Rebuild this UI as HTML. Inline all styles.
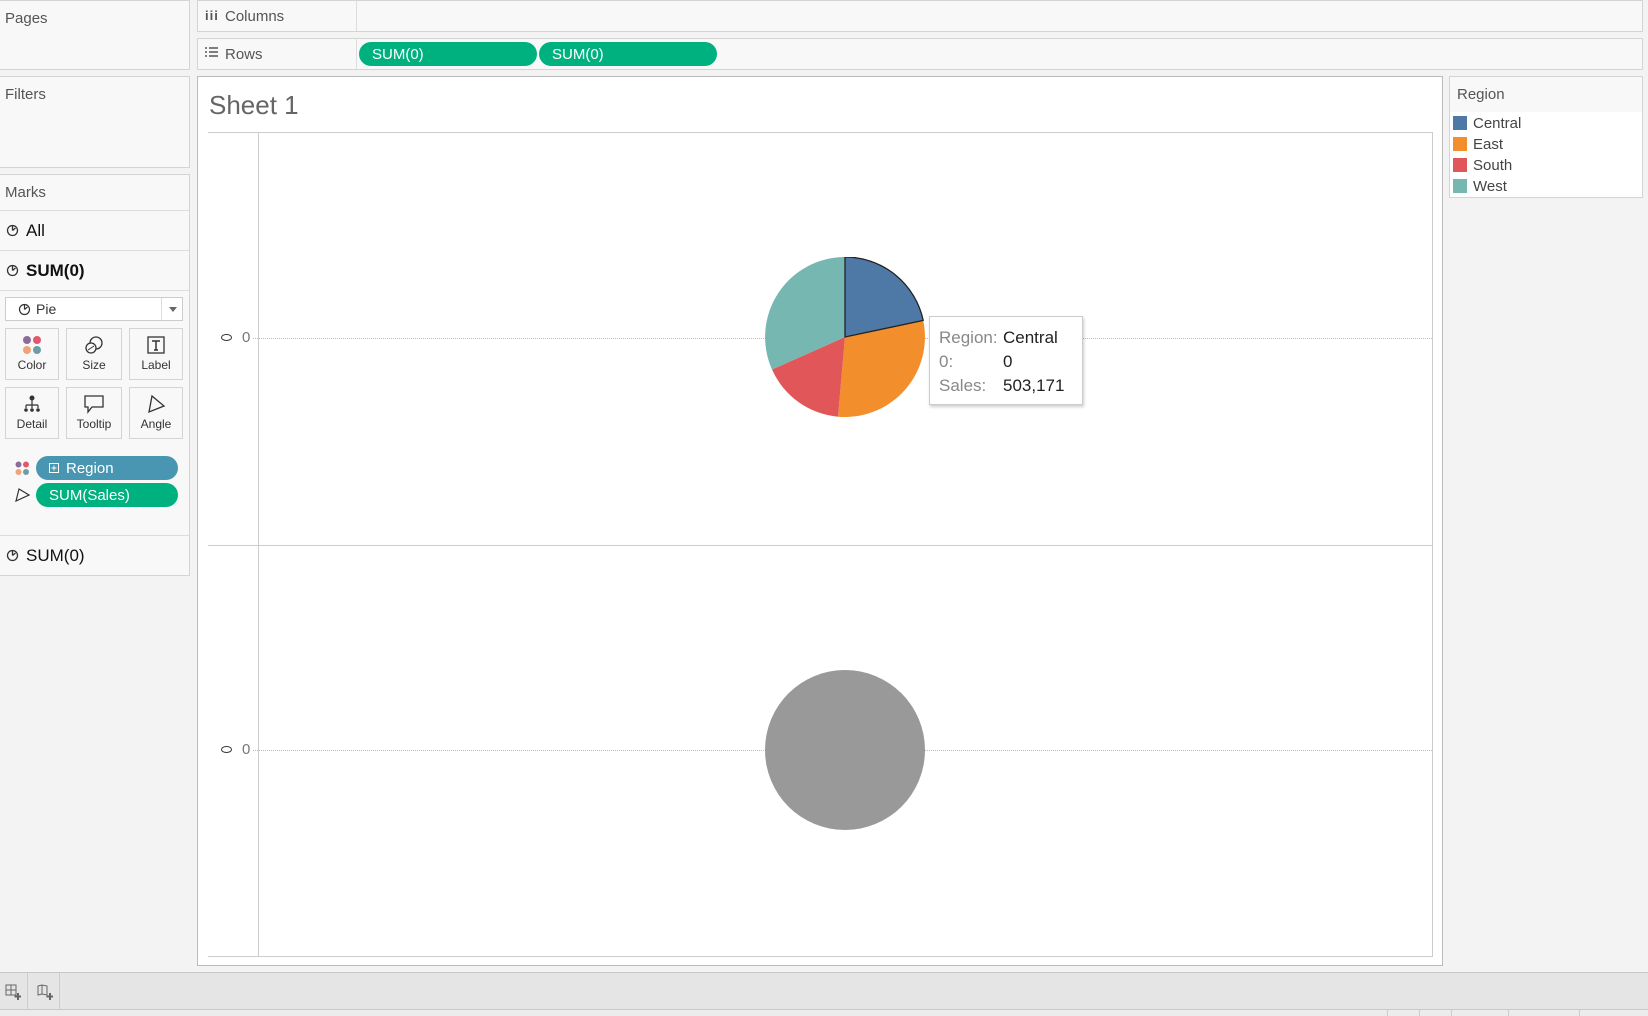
<!DOCTYPE html>
<html><head><meta charset="utf-8"><style>
*{box-sizing:border-box;margin:0;padding:0}
body{width:1648px;height:1016px;background:#f3f3f3;font-family:"Liberation Sans",sans-serif;position:relative;overflow:hidden;color:#333}
.a{position:absolute}
.panel{position:absolute;background:#f8f8f8;border:1px solid #d4d4d4}
.lbl{position:absolute;font-size:15px;color:#555}
.pill{position:absolute;height:24px;border-radius:12px;color:#fff;font-size:15px;line-height:26px}
.card{position:absolute;border:1px solid #d4d4d4;background:#f8f8f8;font-size:12px;color:#333;text-align:center}
.card span{position:absolute;left:0;right:0;bottom:7px}
.card svg{position:absolute;left:50%;top:6px;transform:translateX(-50%)}
.row{position:absolute;left:0;width:190px;border-top:1px solid #dcdcdc;font-size:17px;color:#111}
</style></head><body>
<div class="panel" style="left:-1px;top:0;width:191px;height:70px"></div>
<div class="lbl" style="left:5px;top:10px">Pages</div>
<div class="panel" style="left:-1px;top:76px;width:191px;height:92px"></div>
<div class="lbl" style="left:5px;top:86px">Filters</div>
<div class="panel" style="left:-1px;top:174px;width:191px;height:402px"></div>
<div class="lbl" style="left:5px;top:184px">Marks</div>
<div class="row" style="top:210px;height:40px"><svg class="a" style="left:6px;top:13px" width="13" height="13"><circle cx="6.5" cy="6.5" r="5" fill="none" stroke="#333" stroke-width="1.3"/><path d="M6.5 6.5V1.5M6.5 6.5L9.5 4" stroke="#333" stroke-width="1.3"/></svg><span class="a" style="left:26px;top:10px">All</span></div>
<div class="row" style="top:250px;height:40px"><svg class="a" style="left:6px;top:13px" width="13" height="13"><circle cx="6.5" cy="6.5" r="5" fill="none" stroke="#333" stroke-width="1.3"/><path d="M6.5 6.5V1.5M6.5 6.5L9.5 4" stroke="#333" stroke-width="1.3"/></svg><b class="a" style="left:26px;top:10px">SUM(0)</b></div>
<div class="row" style="top:290px;height:245px"></div>
<div class="a" style="left:5px;top:297px;width:178px;height:24px;border:1px solid #ccc;background:#fff;font-size:14px;color:#333">
<svg class="a" style="left:12px;top:5px" width="13" height="13"><circle cx="6.5" cy="6.5" r="5" fill="none" stroke="#333" stroke-width="1.2"/><path d="M6.5 6.5V1.5M6.5 6.5L9.5 4" stroke="#333" stroke-width="1.2"/></svg>
<span class="a" style="left:30px;top:3px">Pie</span>
<div class="a" style="left:155px;top:0;width:1px;height:22px;background:#ddd"></div>
<div class="a" style="left:163px;top:9px;border:4px solid transparent;border-top:5px solid #666"></div></div>
<div class="card" style="left:5px;top:328px;width:54px;height:52px"><svg width="20" height="20"><circle cx="5" cy="5" r="4" fill="#8c6d9a"/><circle cx="15" cy="5" r="4" fill="#e2576b"/><circle cx="5" cy="15" r="4" fill="#f0a37a"/><circle cx="15" cy="15" r="4" fill="#6b9ea5"/></svg><span>Color</span></div>
<div class="card" style="left:66px;top:328px;width:56px;height:52px"><svg width="20" height="20"><circle cx="12" cy="8" r="6" fill="none" stroke="#333" stroke-width="1.3"/><circle cx="7" cy="13" r="5" fill="#f8f8f8" stroke="#333" stroke-width="1.3"/><path d="M4 15L10 11" stroke="#333"/></svg><span>Size</span></div>
<div class="card" style="left:129px;top:328px;width:54px;height:52px"><svg width="20" height="20"><rect x="2" y="2" width="16" height="16" fill="none" stroke="#333" stroke-width="1.3"/><path d="M6 6H14M10 6V15M8 15H12" stroke="#333" stroke-width="1.5"/></svg><span>Label</span></div>
<div class="card" style="left:5px;top:387px;width:54px;height:52px"><svg width="20" height="20"><circle cx="10" cy="4" r="2.5" fill="#333"/><path d="M10 6V11M4 11H16M4 11V14M10 11V14M16 11V14" stroke="#333" stroke-width="1.2"/><circle cx="4" cy="16" r="1.8" fill="#333"/><circle cx="10" cy="16" r="1.8" fill="#333"/><circle cx="16" cy="16" r="1.8" fill="#333"/></svg><span>Detail</span></div>
<div class="card" style="left:66px;top:387px;width:56px;height:52px"><svg width="22" height="20"><path d="M2 2H20V13H9L5 18V13H2Z" fill="none" stroke="#333" stroke-width="1.3"/></svg><span>Tooltip</span></div>
<div class="card" style="left:129px;top:387px;width:54px;height:52px"><svg width="20" height="20"><path d="M6 2L18 12L3 18Z" fill="none" stroke="#333" stroke-width="1.3"/></svg><span>Angle</span></div>
<svg class="a" style="left:15px;top:461px" width="15" height="15"><circle cx="3.5" cy="3.5" r="3" fill="#8c6d9a"/><circle cx="11" cy="3.5" r="3" fill="#e2576b"/><circle cx="3.5" cy="11" r="3" fill="#f0a37a"/><circle cx="11" cy="11" r="3" fill="#6b9ea5"/></svg>
<div class="pill" style="left:36px;top:456px;width:142px;background:#4996b2"><svg class="a" style="left:13px;top:7px" width="10" height="10"><rect x=".5" y=".5" width="9" height="9" fill="none" stroke="#fff"/><path d="M5 2.5V7.5M2.5 5H7.5" stroke="#fff"/></svg><span class="a" style="left:30px">Region</span></div>
<svg class="a" style="left:15px;top:488px" width="15" height="14"><path d="M4 1L14 7L1 13Z" fill="none" stroke="#333" stroke-width="1.2"/></svg>
<div class="pill" style="left:36px;top:483px;width:142px;background:#00b180"><span class="a" style="left:13px">SUM(Sales)</span></div>
<div class="row" style="top:535px;height:40px"><svg class="a" style="left:6px;top:13px" width="13" height="13"><circle cx="6.5" cy="6.5" r="5" fill="none" stroke="#333" stroke-width="1.3"/><path d="M6.5 6.5V1.5M6.5 6.5L9.5 4" stroke="#333" stroke-width="1.3"/></svg><span class="a" style="left:26px;top:10px">SUM(0)</span></div>

<div class="panel" style="left:197px;top:0;width:1446px;height:32px"></div>
<div class="a" style="left:356px;top:0;width:1px;height:31px;background:#ddd"></div>
<div class="a" style="left:205px;top:8px;font-size:13px;color:#555;font-weight:bold;letter-spacing:1px">iii</div>
<div class="lbl" style="left:225px;top:8px">Columns</div>
<div class="panel" style="left:197px;top:38px;width:1446px;height:32px"></div>
<div class="a" style="left:356px;top:39px;width:1px;height:30px;background:#ddd"></div>
<svg class="a" style="left:205px;top:47px" width="13" height="11"><path d="M0 1H2M4 1H13M0 5H2M4 5H13M0 9H2M4 9H13" stroke="#555" stroke-width="1.5"/></svg>
<div class="lbl" style="left:225px;top:46px">Rows</div>
<div class="pill" style="left:359px;top:42px;width:178px;background:#00b180"><span class="a" style="left:13px">SUM(0)</span></div>
<div class="pill" style="left:539px;top:42px;width:178px;background:#00b180"><span class="a" style="left:13px">SUM(0)</span></div>

<div class="a" style="left:197px;top:76px;width:1246px;height:890px;background:#fff;border:1px solid #bbb"></div>
<div class="a" style="left:209px;top:90px;font-size:26px;color:#666;font-weight:300">Sheet 1</div>
<div class="a" style="left:208px;top:132px;width:1225px;height:1px;background:#ccc"></div>
<div class="a" style="left:258px;top:132px;width:1px;height:825px;background:#ccc"></div>
<div class="a" style="left:1432px;top:132px;width:1px;height:825px;background:#ccc"></div>
<div class="a" style="left:208px;top:545px;width:1225px;height:1px;background:#ccc"></div>
<div class="a" style="left:208px;top:956px;width:1225px;height:1px;background:#ccc"></div>
<div class="a" style="left:253px;top:338px;width:1179px;border-top:1px dotted #bbb"></div>
<div class="a" style="left:253px;top:750px;width:1179px;border-top:1px dotted #bbb"></div>
<div class="a" style="left:221px;top:334px;width:11px;height:7px;border:1.5px solid #333;border-radius:50%"></div>
<div class="a" style="left:242px;top:329px;font-size:15px;color:#777">0</div>
<div class="a" style="left:221px;top:746px;width:11px;height:7px;border:1.5px solid #333;border-radius:50%"></div>
<div class="a" style="left:242px;top:741px;font-size:15px;color:#777">0</div>
<svg class="a" style="left:765px;top:257px" width="160" height="161">
<path d="M80 80L80 0A80 80 0 0 1 158.2 63.4Z" fill="#4e79a7"/>
<path d="M80 80L158.2 63.4A80 80 0 0 1 73 159.7Z" fill="#f28e2b"/>
<path d="M80 80L73 159.7A80 80 0 0 1 7 112.5Z" fill="#e15759"/>
<path d="M80 80L7 112.5A80 80 0 0 1 80 0Z" fill="#76b7b2"/>
<path d="M80 80L80 0A80 80 0 0 1 158.2 63.4Z" fill="none" stroke="#222" stroke-width="1.3"/>
</svg>
<div class="a" style="left:929px;top:316px;width:154px;height:89px;background:#fff;border:1px solid #ccc;box-shadow:1px 2px 3px rgba(0,0,0,.2);font-size:17px;line-height:24px">
<div class="a" style="left:9px;top:9px;color:#888">Region:<br>0:<br>Sales:</div>
<div class="a" style="left:73px;top:9px;color:#222">Central<br>0<br>503,171</div></div>
<div class="a" style="left:765px;top:670px;width:160px;height:160px;border-radius:50%;background:#999"></div>

<div class="a" style="left:1449px;top:76px;width:194px;height:122px;background:#fff;border:1px solid #d4d4d4"></div>
<div class="a" style="left:1450px;top:77px;width:192px;height:35px;background:#f8f8f8"></div>
<div class="lbl" style="left:1457px;top:86px">Region</div>
<div class="a" style="left:1453px;top:113px;font-size:15px;color:#444;line-height:21px">
<div><i style="display:inline-block;width:14px;height:14px;background:#4e79a7;vertical-align:-2px;margin-right:6px"></i>Central</div>
<div><i style="display:inline-block;width:14px;height:14px;background:#f28e2b;vertical-align:-2px;margin-right:6px"></i>East</div>
<div><i style="display:inline-block;width:14px;height:14px;background:#e15759;vertical-align:-2px;margin-right:6px"></i>South</div>
<div><i style="display:inline-block;width:14px;height:14px;background:#76b7b2;vertical-align:-2px;margin-right:6px"></i>West</div></div>

<div class="a" style="left:0;top:972px;width:1648px;height:38px;background:#e5e5e5;border-top:1px solid #c8c8c8"></div>
<div class="a" style="left:27px;top:973px;width:1px;height:37px;background:#ccc"></div>
<div class="a" style="left:59px;top:973px;width:1px;height:37px;background:#ccc"></div>
<svg class="a" style="left:5px;top:984px" width="16" height="16"><path d="M1 1H11V11H1ZM6 1V11M1 6H11" fill="none" stroke="#666"/><path d="M13 9V16M9.5 12.5H16.5" stroke="#666" stroke-width="2"/></svg>
<svg class="a" style="left:37px;top:984px" width="16" height="16"><path d="M1 2L5 1L10 2V11L5 10L1 11Z M5 1V10" fill="none" stroke="#666"/><path d="M13 9V16M9.5 12.5H16.5" stroke="#666" stroke-width="2"/></svg>
<div class="a" style="left:0;top:1009px;width:1648px;height:7px;background:#ececec;border-top:1px solid #c8c8c8"></div>
<div class="a" style="left:1387px;top:1010px;width:1px;height:6px;background:#ccc"></div>
<div class="a" style="left:1419px;top:1010px;width:1px;height:6px;background:#ccc"></div>
<div class="a" style="left:1451px;top:1010px;width:1px;height:6px;background:#ccc"></div>
<div class="a" style="left:1508px;top:1010px;width:1px;height:6px;background:#ccc"></div>
<div class="a" style="left:1579px;top:1010px;width:1px;height:6px;background:#ccc"></div>
</body></html>
